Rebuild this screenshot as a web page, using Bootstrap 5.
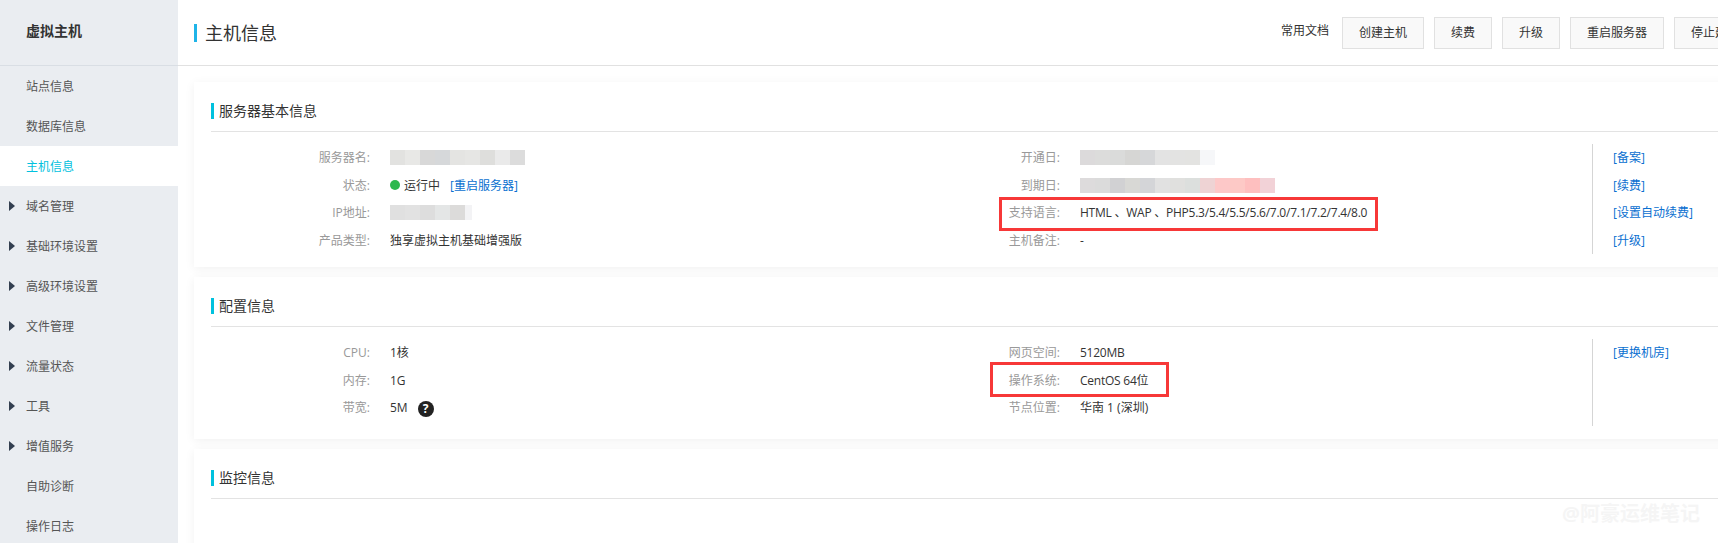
<!DOCTYPE html>
<html lang="zh-CN">
<head>
    <meta charset="UTF-8">
    <meta name="viewport" content="width=device-width, initial-scale=1.0">
    <title>主机信息</title>
    <link href="https://cdn.jsdelivr.net/npm/bootstrap@5.3.3/dist/css/bootstrap.min.css" rel="stylesheet">
    <style>
        html, body {
            height: 100%;
            overflow: hidden;
        }
        body {
            font-family: "Open Sans", "Noto Sans CJK SC", sans-serif;
            font-size: 12px;
            color: #333;
            background: #fff;
        }
        .page-wrap {
            width: 1778px;
            height: 543px;
            position: relative;
            overflow: hidden;
        }
        /* menu gauche */
        .side-menu {
            width: 178px;
            flex: none;
            background: #eaedf1;
        }
        .side-title {
            height: 66px;
            padding: 21px 0 0 26px;
            font-size: 14px;
            font-weight: 700;
            line-height: 20px;
            color: #333;
            border-bottom: 1px solid #d9dee4;
        }
        .side-menu .nav-link {
            height: 40px;
            padding: 1px 0 0 26px;
            line-height: 40px;
            font-size: 12px;
            color: #555;
            position: relative;
        }
        .side-menu .nav-link.active {
            background: #fff;
            color: #00c1de;
        }
        .side-menu .has-arrow::before {
            content: "";
            position: absolute;
            left: 9px;
            top: 15px;
            border-left: 6px solid #333f50;
            border-top: 5.5px solid transparent;
            border-bottom: 5.5px solid transparent;
        }
        /* contenu */
        .main-area {
            flex: 1;
            min-width: 0;
        }
        .top-bar {
            height: 66px;
            padding: 0 22px 0 16px;
            border-bottom: 1px solid #e1e1e1;
        }
        .page-title {
            font-size: 18px;
            font-weight: 400;
            line-height: 18px;
            margin: 0;
            padding-left: 8px;
            border-left: 3px solid #1fb4e8;
            color: #333;
        }
        .doc-link {
            margin-right: 3px;
            position: relative;
            bottom: 2px;
            color: #333;
        }
        .top-btn {
            height: 32px;
            padding: 0 16px;
            font-size: 12px;
            line-height: 28px;
            color: #333;
            background: #f9f9f9;
            border: 1px solid #e1e1e1;
            border-radius: 0;
            white-space: nowrap;
            flex: none;
        }
        .top-actions {
            gap: 10px;
        }
        .content-area {
            padding: 16px 0 0 16px;
        }
        .info-card {
            border: 0;
            border-radius: 0;
            background: #fff;
            box-shadow: 0 2px 10px rgba(0, 0, 0, .06);
            padding: 21px 0 13px 17px;
            margin-bottom: 10px;
        }
        .card-head {
            height: 29px;
            border-bottom: 1px solid #e3e3e3;
            margin-bottom: 12px;
        }
        .card-head h2 {
            font-size: 14px;
            font-weight: 400;
            line-height: 16px;
            margin: 0;
            padding-left: 5px;
            border-left: 3px solid #00c1de;
            color: #333;
        }
        .info-col {
            width: 690px;
            flex: none;
        }
        .info-col-short {
            padding-bottom: 4.5px;
        }
        .info-line {
            height: 27.5px;
            line-height: 27.5px;
        }
        .info-label {
            width: 159px;
            flex: none;
            text-align: right;
            color: #999;
        }
        .info-value {
            margin-left: 20px;
            color: #333;
        }
        .latin-value {
            letter-spacing: -.24px;
        }
        .link-col {
            border-left: 1px solid #d5d5d5;
            margin-left: 1px;
            padding-left: 20px;
            flex: 1;
        }
        .info-card a {
            color: #0a6fd0;
            text-decoration: none;
        }
        .status-dot {
            width: 10px;
            height: 10px;
            background: #2db84d;
            margin-right: 4px;
        }
        .restart-link {
            margin-left: 10px;
        }
        .help-dot {
            width: 16px;
            height: 16px;
            margin: 3px 0 0 10px;
            background: #222;
            color: #fff;
            font-size: 12px;
            font-weight: 700;
            line-height: 16px;
        }
        /* zones floutees */
        .blur-block {
            height: 15px;
        }
        .blur-name {
            width: 135px;
            background: linear-gradient(90deg, #e2e2e0 0 15px, #e8e8e6 15px 30px, #d8d8d8 30px 45px, #d6d8da 45px 60px, #e4e4e2 60px 75px, #e6e6e4 75px 90px, #dededc 90px 105px, #eaeaea 105px 120px, #dcdcdc 120px 135px);
        }
        .blur-ip {
            width: 82px;
            background: linear-gradient(90deg, #e0e0e0 0 15px, #e2e2e2 15px 30px, #dddddd 30px 45px, #e4e6e6 45px 60px, #dcdbda 60px 75px, #f3f3f5 75px 82px);
        }
        .blur-open {
            width: 135px;
            background: linear-gradient(90deg, #dcdadb 0 15px, #dcdcdb 15px 30px, #dadbda 30px 45px, #d6d6d4 45px 60px, #d6d7d9 60px 75px, #e3e3e3 75px 90px, #e3e3e2 90px 105px, #e3e3e1 105px 120px, #f6f7f9 120px 135px);
        }
        .blur-end {
            width: 195px;
            background: linear-gradient(90deg, #dddbdc 0 15px, #dbdbdb 15px 30px, #d1d1d3 30px 45px, #d8d8d5 45px 60px, #d4d5d8 60px 75px, #e1e1e1 75px 90px, #e0e0de 90px 105px, #dcdfdd 105px 120px, #eed3d4 120px 135px, #fdc8c8 135px 150px, #fdc9c6 150px 165px, #febfbf 165px 180px, #f2d2d7 180px 195px);
        }
        /* cadres rouges et filigrane */
        .red-box {
            position: absolute;
            border: 3px solid #f73838;
            pointer-events: none;
        }
        .red-lang {
            left: 999px;
            top: 197px;
            width: 379px;
            height: 34px;
        }
        .red-os {
            left: 990px;
            top: 362px;
            width: 179px;
            height: 35px;
        }
        .water-mark {
            position: absolute;
            left: 1562px;
            top: 500px;
            font-size: 20px;
            font-weight: 700;
            line-height: 28px;
            color: #f5f5f5;
        }
    </style>
</head>
<body>
    <div class="page-wrap d-flex">
        <!-- Menu gauche -->
        <div class="side-menu">
            <div class="side-title">虚拟主机</div>
            <nav class="nav flex-column">
                <a class="nav-link" href="#">站点信息</a>
                <a class="nav-link" href="#">数据库信息</a>
                <a class="nav-link active" href="#">主机信息</a>
                <a class="nav-link has-arrow" href="#">域名管理</a>
                <a class="nav-link has-arrow" href="#">基础环境设置</a>
                <a class="nav-link has-arrow" href="#">高级环境设置</a>
                <a class="nav-link has-arrow" href="#">文件管理</a>
                <a class="nav-link has-arrow" href="#">流量状态</a>
                <a class="nav-link has-arrow" href="#">工具</a>
                <a class="nav-link has-arrow" href="#">增值服务</a>
                <a class="nav-link" href="#">自助诊断</a>
                <a class="nav-link" href="#">操作日志</a>
            </nav>
        </div>

        <div class="main-area">
            <!-- Bandeau superieur -->
            <div class="top-bar d-flex align-items-center justify-content-between">
                <h1 class="page-title">主机信息</h1>
                <div class="top-actions d-flex align-items-center">
                    <span class="doc-link">常用文档</span>
                    <button type="button" class="btn top-btn">创建主机</button>
                    <button type="button" class="btn top-btn">续费</button>
                    <button type="button" class="btn top-btn">升级</button>
                    <button type="button" class="btn top-btn">重启服务器</button>
                    <button type="button" class="btn top-btn">停止建站</button>
                </div>
            </div>

            <div class="content-area">
                <div class="card info-card">
                    <div class="card-head"><h2>服务器基本信息</h2></div>
                    <div class="d-flex">
                        <div class="info-col">
                            <div class="info-line d-flex align-items-center"><span class="info-label">服务器名:</span><span class="info-value blur-block blur-name"></span></div>
                            <div class="info-line d-flex align-items-center"><span class="info-label">状态:</span><span class="info-value d-flex align-items-center"><span class="status-dot rounded-circle"></span>运行中<a class="restart-link" href="#">[重启服务器]</a></span></div>
                            <div class="info-line d-flex align-items-center"><span class="info-label">IP地址:</span><span class="info-value blur-block blur-ip"></span></div>
                            <div class="info-line d-flex align-items-center"><span class="info-label">产品类型:</span><span class="info-value">独享虚拟主机基础增强版</span></div>
                        </div>
                        <div class="info-col">
                            <div class="info-line d-flex align-items-center"><span class="info-label">开通日:</span><span class="info-value blur-block blur-open"></span></div>
                            <div class="info-line d-flex align-items-center"><span class="info-label">到期日:</span><span class="info-value blur-block blur-end"></span></div>
                            <div class="info-line d-flex align-items-center"><span class="info-label">支持语言:</span><span class="info-value latin-value">HTML 、WAP 、PHP5.3/5.4/5.5/5.6/7.0/7.1/7.2/7.4/8.0</span></div>
                            <div class="info-line d-flex align-items-center"><span class="info-label">主机备注:</span><span class="info-value">-</span></div>
                        </div>
                        <div class="link-col">
                            <div class="info-line"><a href="#">[备案]</a></div>
                            <div class="info-line"><a href="#">[续费]</a></div>
                            <div class="info-line"><a href="#">[设置自动续费]</a></div>
                            <div class="info-line"><a href="#">[升级]</a></div>
                        </div>
                    </div>
                </div>

                <div class="card info-card">
                    <div class="card-head"><h2>配置信息</h2></div>
                    <div class="d-flex">
                        <div class="info-col info-col-short">
                            <div class="info-line d-flex align-items-center"><span class="info-label">CPU:</span><span class="info-value">1核</span></div>
                            <div class="info-line d-flex align-items-center"><span class="info-label">内存:</span><span class="info-value">1G</span></div>
                            <div class="info-line d-flex align-items-center"><span class="info-label">带宽:</span><span class="info-value">5M</span><span class="help-dot rounded-circle text-center">?</span></div>
                        </div>
                        <div class="info-col info-col-short">
                            <div class="info-line d-flex align-items-center"><span class="info-label">网页空间:</span><span class="info-value latin-value">5120MB</span></div>
                            <div class="info-line d-flex align-items-center"><span class="info-label">操作系统:</span><span class="info-value latin-value">CentOS 64位</span></div>
                            <div class="info-line d-flex align-items-center"><span class="info-label">节点位置:</span><span class="info-value">华南 1 (深圳)</span></div>
                        </div>
                        <div class="link-col">
                            <div class="info-line"><a href="#">[更换机房]</a></div>
                        </div>
                    </div>
                </div>

                <div class="card info-card">
                    <div class="card-head"><h2>监控信息</h2></div>
                    <div class="py-5"></div>
                </div>
            </div>
        </div>

        <div class="red-box red-lang"></div>
        <div class="red-box red-os"></div>
        <div class="water-mark">@阿豪运维笔记</div>
    </div>
    <script src="https://cdn.jsdelivr.net/npm/bootstrap@5.3.3/dist/js/bootstrap.bundle.min.js"></script>
</body>
</html>
